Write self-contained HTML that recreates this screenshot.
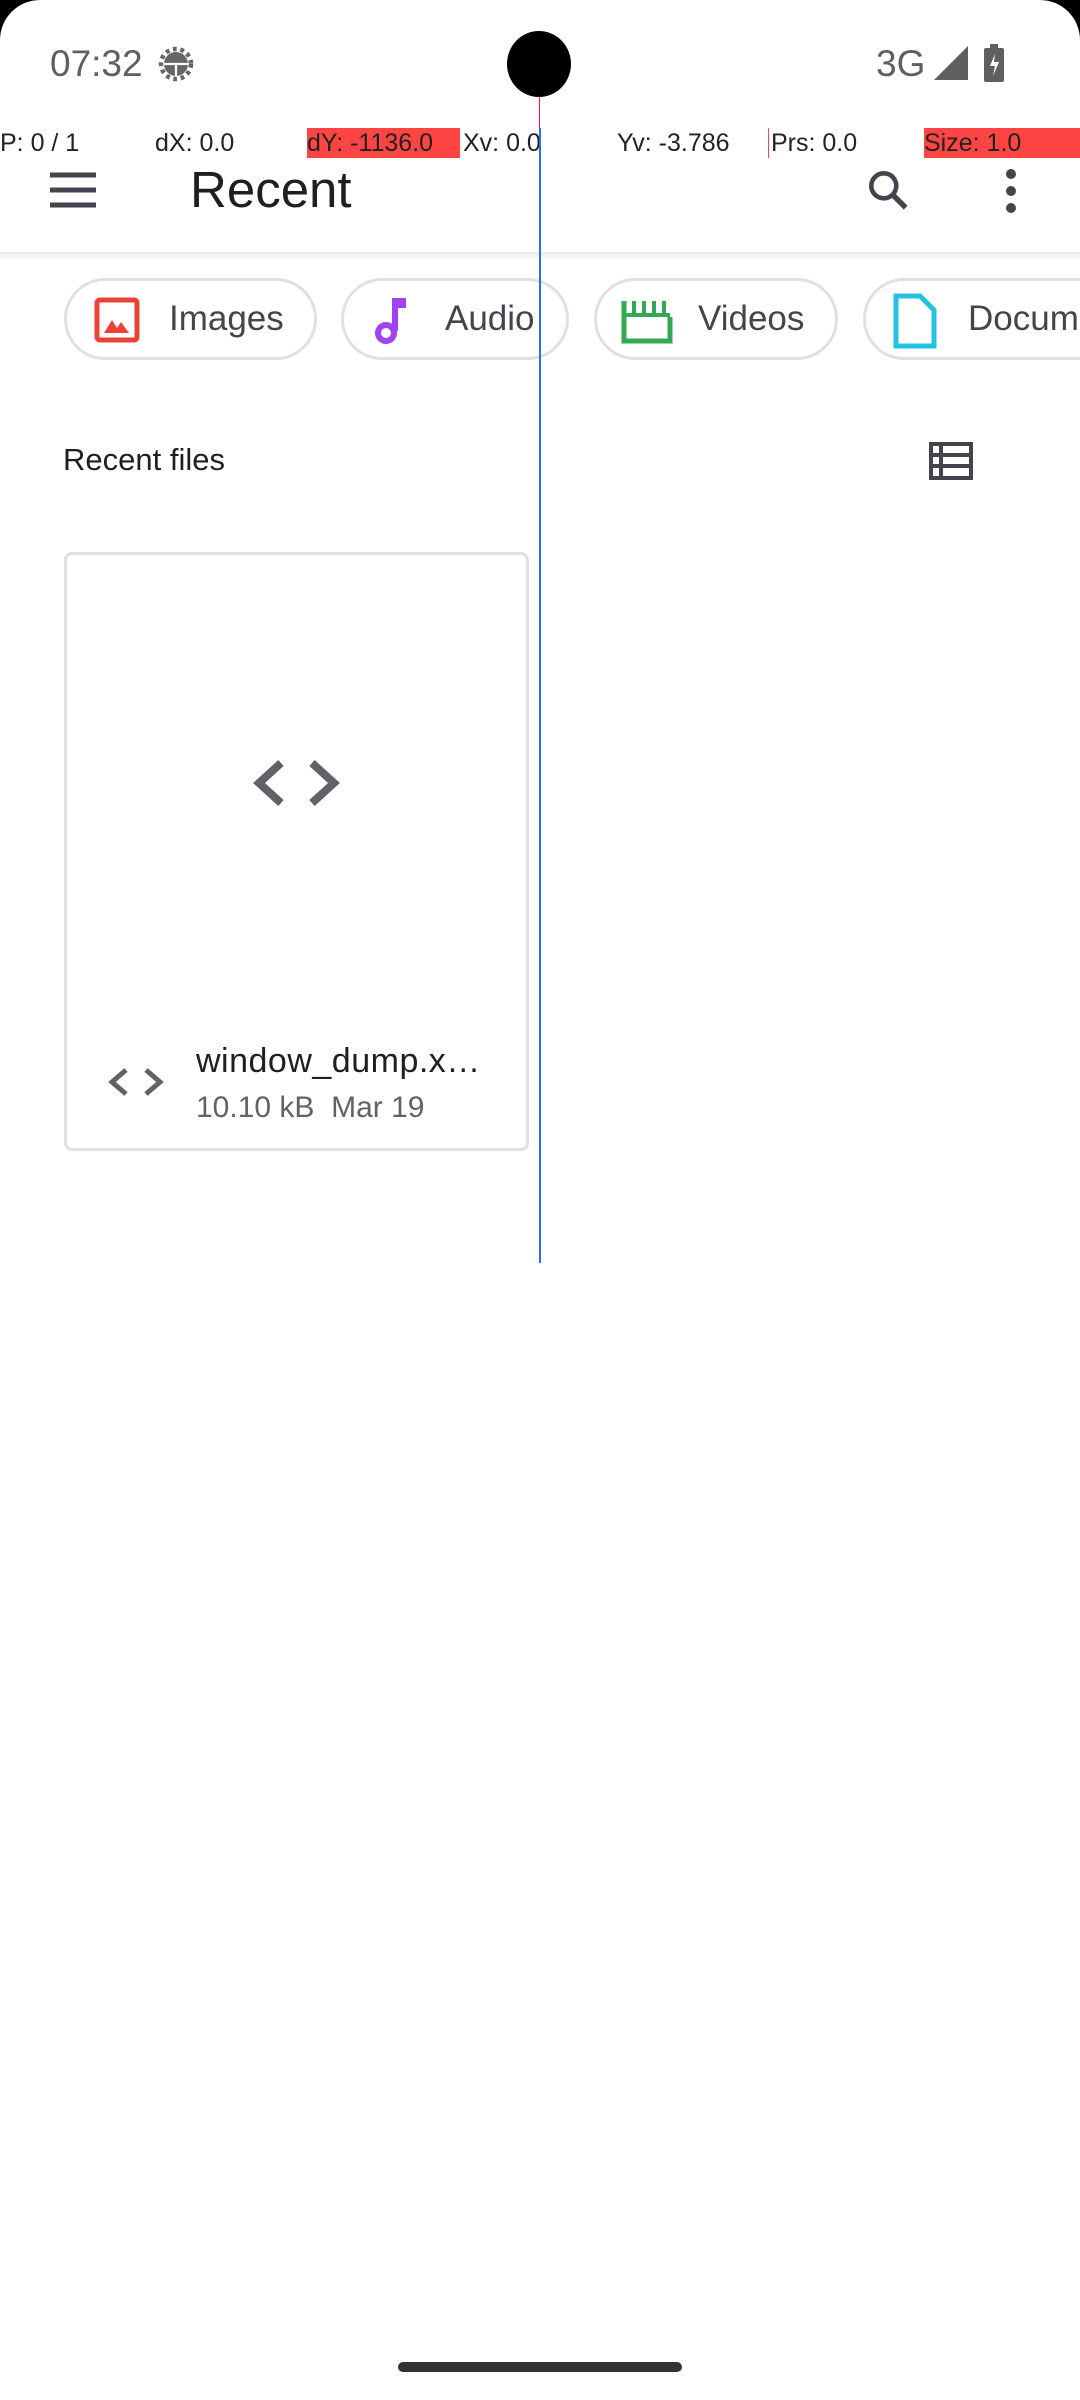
<!DOCTYPE html>
<html><head><meta charset="utf-8"><style>
*{margin:0;padding:0;box-sizing:border-box}
body{width:1080px;height:2400px;background:#000;font-family:"Liberation Sans",sans-serif;overflow:hidden}
#s{position:absolute;left:0;top:0;width:1080px;height:2400px;background:#fff;border-radius:40px 40px 0 0;overflow:hidden}
.a{position:absolute;white-space:nowrap}
.dbg{top:128px;height:30px;line-height:30px;font-size:25px;color:#222}
.chip{position:absolute;top:278px;height:82px;border:3px solid #e0e0e0;border-radius:41px;background:#fff}
.chip span{position:absolute;top:0;line-height:76px;font-size:35px;color:#44444e}
</style></head><body><div id="s">
<div class="a" style="left:50px;top:43px;font-size:37px;color:#5f5f5f">07:32</div>
<svg class="a" style="left:158px;top:46px" width="36" height="36" viewBox="0 0 24 24"><circle cx="12" cy="12" r="8" fill="#666"/><circle cx="12" cy="12" r="10" fill="none" stroke="#666" stroke-width="3" stroke-dasharray="2.5 2.5"/><path d="M4 12h16M12 12v8" stroke="#fff" stroke-width="1.5"/></svg>
<div class="a" style="left:876px;top:43px;font-size:37px;color:#5f5f5f">3G</div>
<svg class="a" style="left:934px;top:46px" width="34" height="34"><path d="M34 0V34H0Z" fill="#5f5f5f"/></svg>
<svg class="a" style="left:984px;top:44px" width="20" height="38"><rect x="0" y="4" width="20" height="34" rx="2" fill="#5f5f5f"/><rect x="6" y="0" width="8" height="5" fill="#5f5f5f"/><path d="M11 10L6 22h5l-2 10 6-14h-5z" fill="#fff"/></svg>
<div class="a" style="left:507px;top:31px;width:64px;height:66px;border-radius:50%;background:#000"></div>
<div class="a" style="left:539px;top:97px;width:1px;height:31px;background:#f08"></div>
<div class="a dbg" style="left:0">P: 0 / 1</div>
<div class="a dbg" style="left:155px">dX: 0.0</div>
<div class="a dbg" style="left:307px;width:153px;background:#ff4444">dY: -1136.0</div>
<div class="a dbg" style="left:463px">Xv: 0.0</div>
<div class="a dbg" style="left:617px">Yv: -3.786</div>
<div class="a" style="left:768px;top:128px;width:1px;height:30px;background:#f44"></div>
<div class="a dbg" style="left:771px">Prs: 0.0</div>
<div class="a dbg" style="left:924px;width:156px;background:#ff4444">Size: 1.0</div>
<div class="a" style="left:0;top:252px;width:1080px;height:8px;background:linear-gradient(#e8e8e8,#fff)"></div>
<svg class="a" style="left:50px;top:172px" width="46" height="36"><path d="M0 3h46M0 18h46M0 33h46" stroke="#44444e" stroke-width="5"/></svg>
<div class="a" style="left:190px;top:160px;font-size:51px;color:#1f1f1f">Recent</div>
<svg class="a" style="left:864px;top:166px" width="50" height="50" viewBox="0 0 24 24"><circle cx="9.5" cy="9.5" r="6" fill="none" stroke="#44444e" stroke-width="2.2"/><path d="M14 14l6 6" stroke="#44444e" stroke-width="2.6"/></svg>
<svg class="a" style="left:1000px;top:168px" width="22" height="46"><circle cx="11" cy="6" r="5" fill="#44444e"/><circle cx="11" cy="23" r="5" fill="#44444e"/><circle cx="11" cy="40" r="5" fill="#44444e"/></svg>
<div class="chip" style="left:64px;width:253px"><svg class="a" style="left:27px;top:16px" width="46" height="46"><rect x="3" y="3" width="40" height="40" rx="3" fill="none" stroke="#ea4335" stroke-width="5"/><path d="M10 36l8-13 5 8 4-6 8 11z" fill="#ea4335"/></svg><span style="left:102px">Images</span></div>
<div class="chip" style="left:341px;width:228px"><svg class="a" style="left:30px;top:14px" width="34" height="52"><path d="M18 36V3h14v10H24v23" fill="#a142f4"/><circle cx="12" cy="38" r="8" fill="none" stroke="#a142f4" stroke-width="6"/></svg><span style="left:101px">Audio</span></div>
<div class="chip" style="left:594px;width:244px"><svg class="a" style="left:23px;top:16px" width="54" height="48"><path d="M4 4v40h46V20" fill="none" stroke="#34a853" stroke-width="5"/><path d="M4 4l0 14h46M14 4v12M24 4v12M34 4v12M44 4v12" stroke="#34a853" stroke-width="4" fill="none"/></svg><span style="left:101px">Videos</span></div>
<div class="chip" style="left:863px;width:260px"><svg class="a" style="left:27px;top:12px" width="44" height="56"><path d="M3 3h24l14 14v36H3z" fill="none" stroke="#24c1e0" stroke-width="5"/></svg><span style="left:102px">Documents</span></div>
<div class="a" style="left:63px;top:442px;font-size:31px;color:#1f1f1f">Recent files</div>
<svg class="a" style="left:929px;top:442px" width="44" height="38"><rect x="2" y="2" width="40" height="34" fill="none" stroke="#44444e" stroke-width="4"/><path d="M2 13h40M2 24h40M12 2v34" stroke="#44444e" stroke-width="4"/></svg>
<div class="a" style="left:64px;top:552px;width:465px;height:599px;border:3px solid #e0e0e0;border-radius:8px"></div>
<svg class="a" style="left:252px;top:760px" width="89" height="46"><path d="M29 3L7 23l22 20M60 3l22 20-22 20" fill="none" stroke="#5f6368" stroke-width="8"/></svg>
<svg class="a" style="left:108px;top:1068px" width="56" height="28"><path d="M18 2L4 14l14 12M38 2l14 12-14 12" fill="none" stroke="#5f6368" stroke-width="5"/></svg>
<div class="a" style="left:196px;top:1042px;font-size:34px;color:#1f1f1f;letter-spacing:0.5px">window_dump.x…</div>
<div class="a" style="left:196px;top:1091px;font-size:30px;color:#5f6368">10.10 kB&nbsp; Mar 19</div>
<div class="a" style="left:539px;top:128px;width:2px;height:1135px;background:#2a6cf0"></div>
<div class="a" style="left:398px;top:2362px;width:284px;height:10px;border-radius:5px;background:#333"></div>
</div></body></html>
